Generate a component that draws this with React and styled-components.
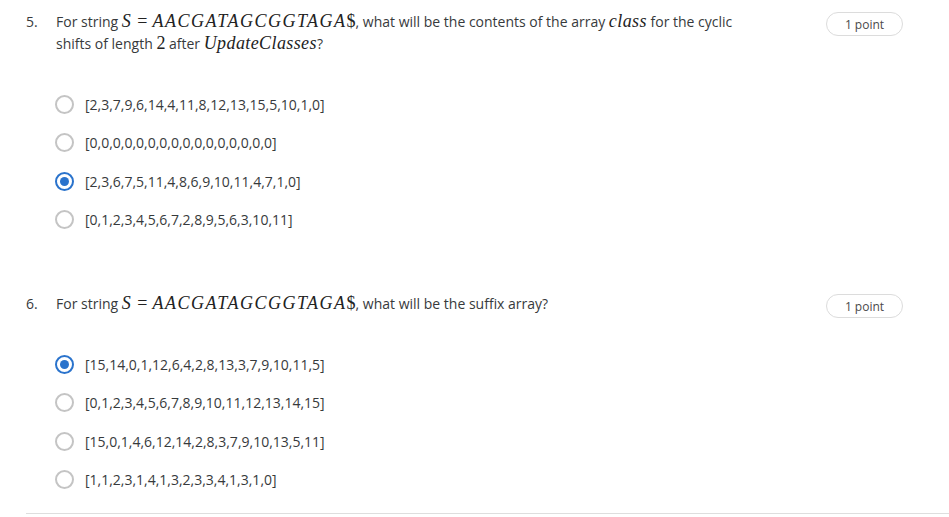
import React from 'react'
import styled, { createGlobalStyle } from 'styled-components'

const GlobalStyle = createGlobalStyle`
  body {
    margin: 0;
    background: #fff;
    font-family: "Open Sans", "Noto Sans", sans-serif;
    color: #373a3c;
  }
`

const Page = styled.div`
  padding: 11px 0 0 26px;
`

const Question = styled.div`
  display: flex;
  align-items: flex-start;

  & + & {
    margin-top: 54px;
  }
`

const Number = styled.div`
  width: 30px;
  font-size: 14px;
  line-height: 22px;
`

const Body = styled.div`
  flex: 1;
`

const Prompt = styled.div`
  width: 690px;
  font-size: 14px;
  line-height: 22px;
`

const MathVar = styled.span`
  font-family: "Liberation Serif", "DejaVu Serif", serif;
  font-style: italic;
  font-size: 18px;
  line-height: 0;
  letter-spacing: ${({ $tight }) => $tight ? '0.4px' : '1.5px'};
  color: #222;
`

const Up = styled.span`
  font-family: "Liberation Serif", "DejaVu Serif", serif;
  font-style: normal;
  font-size: 18px;
  line-height: 0;
  letter-spacing: 0;
  color: #222;
`

const Rel = styled(Up)`
  margin: 0 5px;
`

const Options = styled.div`
  margin-top: 30px;
  display: flex;
  flex-direction: column;
`

const Option = styled.label`
  display: flex;
  align-items: center;
  height: 38.5px;
`

const Radio = styled.span`
  box-sizing: border-box;
  width: 19px;
  height: 19px;
  border-radius: 50%;
  border: ${({ $checked }) => $checked ? '2.5px solid #2a73cc' : '2px solid #c4c4c4'};
  display: flex;
  align-items: center;
  justify-content: center;
  margin-left: -1px;
  margin-right: 11px;

  &::after {
    content: '';
    display: ${({ $checked }) => $checked ? 'block' : 'none'};
    width: 9px;
    height: 9px;
    border-radius: 50%;
    background: #2a73cc;
  }
`

const OptionText = styled.span`
  font-size: 14px;
  color: #373a3c;
`

const Points = styled.div`
  box-sizing: border-box;
  width: 77px;
  height: 24px;
  margin-top: 1px;
  margin-right: 46px;
  border: 1px solid #dcdcdc;
  border-radius: 12px;
  display: flex;
  align-items: center;
  justify-content: center;
  font-size: 12px;
  color: #4a4a4a;
`

const Divider = styled.div`
  margin-top: 14px;
  height: 1px;
  background: #dedede;
`

const questions = [
  {
    number: '5.',
    text: (
      <>
        For string <MathVar>S</MathVar><Rel>=</Rel><MathVar>AACGATAGCGGTAGA<Up>$</Up></MathVar>, what will be the
        contents of the array <MathVar $tight>class</MathVar> for the cyclic shifts of length <Up>2</Up> after{' '}
        <MathVar $tight>UpdateClasses</MathVar>?
      </>
    ),
    options: [
      '[2,3,7,9,6,14,4,11,8,12,13,15,5,10,1,0]',
      '[0,0,0,0,0,0,0,0,0,0,0,0,0,0,0,0]',
      '[2,3,6,7,5,11,4,8,6,9,10,11,4,7,1,0]',
      '[0,1,2,3,4,5,6,7,2,8,9,5,6,3,10,11]',
    ],
    selected: 2,
  },
  {
    number: '6.',
    text: (
      <>
        For string <MathVar>S</MathVar><Rel>=</Rel><MathVar>AACGATAGCGGTAGA<Up>$</Up></MathVar>, what will be the
        suffix array?
      </>
    ),
    options: [
      '[15,14,0,1,12,6,4,2,8,13,3,7,9,10,11,5]',
      '[0,1,2,3,4,5,6,7,8,9,10,11,12,13,14,15]',
      '[15,0,1,4,6,12,14,2,8,3,7,9,10,13,5,11]',
      '[1,1,2,3,1,4,1,3,2,3,3,4,1,3,1,0]',
    ],
    selected: 0,
  },
]

function App () {
  return (
    <Page>
      <GlobalStyle/>
      {questions.map((q) => (
        <Question key={q.number}>
          <Number>{q.number}</Number>
          <Body>
            <Prompt>{q.text}</Prompt>
            <Options>
              {q.options.map((opt, i) => (
                <Option key={opt}>
                  <Radio $checked={i === q.selected}/>
                  <OptionText>{opt}</OptionText>
                </Option>
              ))}
            </Options>
          </Body>
          <Points>1 point</Points>
        </Question>
      ))}
      <Divider/>
    </Page>
  )
}

export default App
